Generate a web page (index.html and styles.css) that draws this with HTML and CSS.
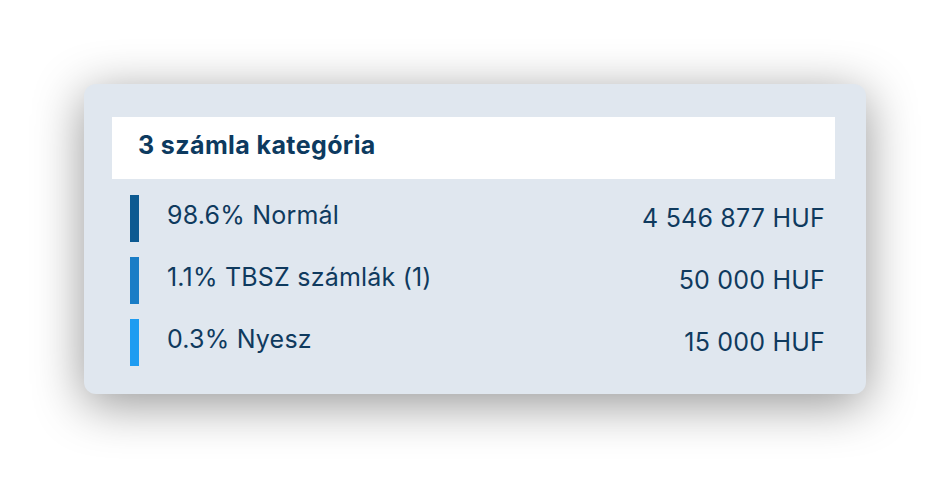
FILE: index.html
```html
<!DOCTYPE html>
<html lang="hu">
<head>
<meta charset="utf-8">
<link rel="stylesheet" href="styles.css">
</head>
<body>
<div class="card">
  <div class="card-header">3 számla kategória</div>
  <div class="rows">
    <div class="row">
      <span class="bar bar-1"></span>
      <span class="label">98.6% Normál</span>
      <span class="amount">4 546 877 HUF</span>
    </div>
    <div class="row">
      <span class="bar bar-2"></span>
      <span class="label">1.1% TBSZ számlák (1)</span>
      <span class="amount">50 000 HUF</span>
    </div>
    <div class="row">
      <span class="bar bar-3"></span>
      <span class="label">0.3% Nyesz</span>
      <span class="amount">15 000 HUF</span>
    </div>
  </div>
</div>
</body>
</html>
```
FILE: styles.css
```css
html, body {
  margin: 0;
  padding: 0;
  background: #ffffff;
}
html { height: 100%; }
body {
  box-sizing: border-box;
  min-height: 100%;
  font-family: Inter, "Noto Sans", sans-serif;
  color: #0f3a5e;
  padding: 84px 0 0 84px;
}
.card {
  box-sizing: border-box;
  width: 782px;
  height: 310px;
  background: #e0e7ef;
  border-radius: 12px;
  padding: 33px 31px 0 28px;
  box-shadow: 0 10px 50px rgba(0, 0, 0, 0.42);
}
.card-header {
  box-sizing: border-box;
  height: 62px;
  background: #ffffff;
  padding: 0 0 6px 26px;
  display: flex;
  align-items: center;
  font-size: 25px;
  font-weight: 700;
  letter-spacing: 0.4px;
  color: #0d3a5f;
}
.rows {
  display: flex;
  flex-direction: column;
  gap: 15px;
  padding: 16px 10px 0 18px;
}
.row {
  display: flex;
  align-items: center;
  height: 47px;
  font-size: 25px;
  letter-spacing: 0.2px;
}
.bar {
  width: 9px;
  height: 47px;
  flex: none;
}
.bar-1 { background: #0d5a91; }
.bar-2 { background: #1a7dc6; }
.bar-3 { background: #1e9cf1; }
.label {
  margin-left: 28px;
  flex: 1;
  margin-top: -8px;
}
.amount {
  text-align: right;
  margin-top: -2px;
}
```
